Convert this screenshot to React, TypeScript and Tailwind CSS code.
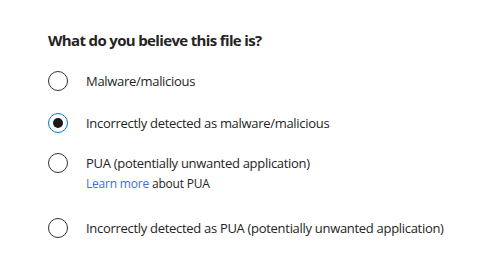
import { useState } from 'react';

const options = [
  { id: 'malware', label: 'Malware/malicious' },
  { id: 'fp-malware', label: 'Incorrectly detected as malware/malicious' },
  { id: 'pua', label: 'PUA (potentially unwanted application)' },
  { id: 'fp-pua', label: 'Incorrectly detected as PUA (potentially unwanted application)' },
];

function Radio({ checked }: { checked: boolean }) {
  return (
    <span
      className={
        checked
          ? 'flex h-5 w-5 shrink-0 items-center justify-center rounded-full border border-[#0078d4]'
          : 'flex h-5 w-5 shrink-0 items-center justify-center rounded-full border border-[#323130]'
      }
    >
      {checked && <span className="h-[10px] w-[10px] rounded-full bg-[#1b1a19]" />}
    </span>
  );
}

export default function App() {
  const [selected, setSelected] = useState('fp-malware');

  const row = (id: string, label: string, className: string) => (
    <label key={id} className={`flex h-5 cursor-pointer items-center gap-[18px] ${className}`} onClick={() => setSelected(id)}>
      <Radio checked={selected === id} />
      <span className="text-[13px] leading-5 tracking-[-0.3px] text-[#252423]">{label}</span>
    </label>
  );

  return (
    <div className="h-[264px] w-[503px] overflow-hidden bg-white pl-[48px] pt-[30px] font-['Open_Sans','Liberation_Sans',sans-serif]">
      <h2 className="text-[15px] font-bold leading-5 tracking-[-0.65px] text-[#252423]">What do you believe this file is?</h2>
      <div className="flex flex-col">
        {row(options[0].id, options[0].label, 'mt-[21px]')}
        {row(options[1].id, options[1].label, 'mt-[22px]')}
        {row(options[2].id, options[2].label, 'mt-[20px]')}
        <div className="mt-[3px] pl-[38px] text-[12px] leading-4 tracking-[-0.2px] text-[#252423]">
          <a href="#" className="text-[#3b6fd8]">Learn more</a> about PUA
        </div>
        {row(options[3].id, options[3].label, 'mt-[26px]')}
      </div>
    </div>
  );
}
